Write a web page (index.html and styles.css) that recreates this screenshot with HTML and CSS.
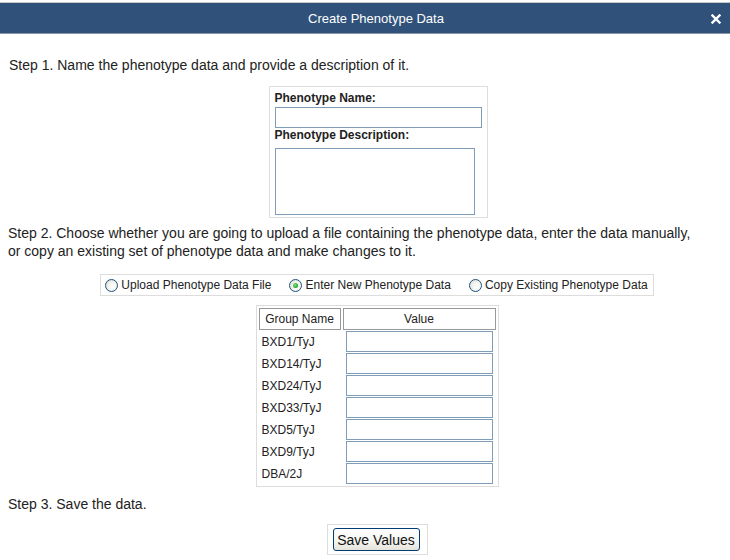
FILE: index.html
```html
<!DOCTYPE html>
<html>
<head>
<meta charset="utf-8">
<link rel="stylesheet" href="styles.css">
</head>
<body>
<div class="dialog">
  <div class="titlebar">
    <span class="title">Create Phenotype Data</span>
    <span class="close"><svg width="10" height="10" viewBox="0 0 10 10"><path d="M1.5 1.5 L8.5 8.5 M8.5 1.5 L1.5 8.5" stroke="#fff" stroke-width="2.4" stroke-linecap="square"/></svg></span>
  </div>
  <div class="content">
    <p class="step step1">Step 1. Name the phenotype data and provide a description of it.</p>
    <div class="center">
      <div class="namebox">
        <label class="lbl lbl1">Phenotype Name:</label>
        <input class="txt name" type="text">
        <label class="lbl">Phenotype Description:</label>
        <textarea class="txt desc"></textarea>
      </div>
    </div>
    <p class="step step2">Step 2. Choose whether you are going to upload a file containing the phenotype data, enter the data manually, or copy an existing set of phenotype data and make changes to it.</p>
    <div class="center">
      <div class="radiobox">
        <label class="opt"><input type="radio" name="m" class="rad">Upload Phenotype Data File</label>
        <label class="opt"><input type="radio" name="m" class="rad" checked>Enter New Phenotype Data</label>
        <label class="opt"><input type="radio" name="m" class="rad">Copy Existing Phenotype Data</label>
      </div>
    </div>
    <div class="center">
      <table class="grid">
        <thead>
          <tr><th class="hgroup">Group Name</th><th class="hval">Value</th></tr>
        </thead>
        <tbody>
          <tr><td class="gname">BXD1/TyJ</td><td class="gval"><input class="txt val" type="text"></td></tr>
          <tr><td class="gname">BXD14/TyJ</td><td class="gval"><input class="txt val" type="text"></td></tr>
          <tr><td class="gname">BXD24/TyJ</td><td class="gval"><input class="txt val" type="text"></td></tr>
          <tr><td class="gname">BXD33/TyJ</td><td class="gval"><input class="txt val" type="text"></td></tr>
          <tr><td class="gname">BXD5/TyJ</td><td class="gval"><input class="txt val" type="text"></td></tr>
          <tr><td class="gname">BXD9/TyJ</td><td class="gval"><input class="txt val" type="text"></td></tr>
          <tr><td class="gname">DBA/2J</td><td class="gval"><input class="txt val" type="text"></td></tr>
        </tbody>
      </table>
    </div>
    <p class="step step3">Step 3. Save the data.</p>
    <div class="center">
      <div class="btnbox"><button class="btn" type="button">Save Values</button></div>
    </div>
  </div>
</div>
</body>
</html>
```

FILE: styles.css
```css
html, body {
  margin: 0;
  padding: 0;
  background: #fff;
  overflow: hidden;
}
body {
  font-family: "Liberation Sans", Arial, sans-serif;
  color: #222;
}
.dialog {
  width: 752px;
}
.titlebar {
  position: relative;
  height: 32px;
  margin-top: 2px;
  background: #30527a;
  border-top: 1px solid #c8c8c8;
  border-bottom: 1px solid #8a96a6;
  box-sizing: border-box;
  display: flex;
  align-items: center;
  justify-content: center;
  color: #fff;
  font-size: 13px;
}
.close {
  position: absolute;
  left: 711px;
  top: 11px;
  line-height: 0;
}
.content {
  padding: 0 6px 0 8px;
}
.step {
  margin: 0;
  font-size: 14px;
  line-height: 18px;
  width: 690px;
}
.step1 {
  margin-top: 22px;
  padding-left: 1px;
}
.center {
  display: flex;
  justify-content: center;
}
.namebox {
  margin-top: 12px;
  border: 1px solid #ddd;
  padding: 4px 5px 2px 5px;
  width: 207px;
  display: flex;
  flex-direction: column;
  align-items: flex-start;
  position: relative;
  left: 1px;
}
.lbl {
  font-size: 12px;
  font-weight: bold;
  line-height: 14px;
  color: #222;
}
.txt {
  box-sizing: border-box;
  border: 1px solid #7f9db9;
  margin: 0;
  padding: 1px 2px;
  font-family: "Liberation Sans", Arial, sans-serif;
  font-size: 12px;
  background: #fff;
}
.name {
  width: 207px;
  height: 21px;
  margin: 2px 0 0 0;
}
.desc {
  width: 200px;
  height: 67px;
  margin-top: 6px;
  resize: none;
  display: block;
}
.step2 {
  margin-top: 6px;
}
.radiobox {
  margin-top: 14px;
  border: 1px solid #ddd;
  height: 22px;
  box-sizing: border-box;
  padding: 0 5px 0 4px;
  display: flex;
  align-items: center;
  gap: 18px;
  font-size: 12px;
}
.opt {
  display: flex;
  align-items: center;
  white-space: nowrap;
}
.rad {
  appearance: none;
  -webkit-appearance: none;
  width: 13px;
  height: 13px;
  margin: 0 3px 0 0;
  border-radius: 50%;
  border: 1px solid #1c5180;
  background: radial-gradient(circle at 60% 60%, #fff 0%, #f3f3ee 45%, #d6d6ce 100%);
  box-sizing: border-box;
  position: relative;
}
.rad:checked::after {
  content: "";
  position: absolute;
  left: 3px;
  top: 3px;
  width: 5px;
  height: 5px;
  border-radius: 50%;
  background: radial-gradient(circle at 40% 40%, #8be38b 0%, #21a121 70%, #1b8a1b 100%);
}
.grid {
  margin-top: 9px;
  border: 1px solid #ddd;
  border-spacing: 2px 1px;
  padding: 1px 0;
  font-size: 12px;
}
.grid th {
  font-weight: normal;
  border: 1px solid #999;
  height: 22px;
  box-sizing: border-box;
  padding: 0 5px;
  color: #222;
}
.hgroup {
  width: 82px;
}
.hval {
  width: 153px;
}
.grid td {
  padding: 0 2px;
  height: 21px;
}
.gname {
  padding-left: 3px !important;
}
.val {
  width: 147px;
  height: 21px;
  display: block;
  margin-left: 1px;
}
.step3 {
  margin-top: 8px;
}
.btnbox {
  margin-top: 11px;
  border: 1px solid #ddd;
  padding: 3px 7px 3px 5px;
}
.btn {
  font-family: "Liberation Sans", Arial, sans-serif;
  font-size: 14px;
  color: #111;
  height: 23px;
  width: 87px;
  padding: 0;
  border: 1px solid #003c74;
  border-radius: 3px;
  background: linear-gradient(#ffffff, #f4f4f0 60%, #e4e3da);
}
```
